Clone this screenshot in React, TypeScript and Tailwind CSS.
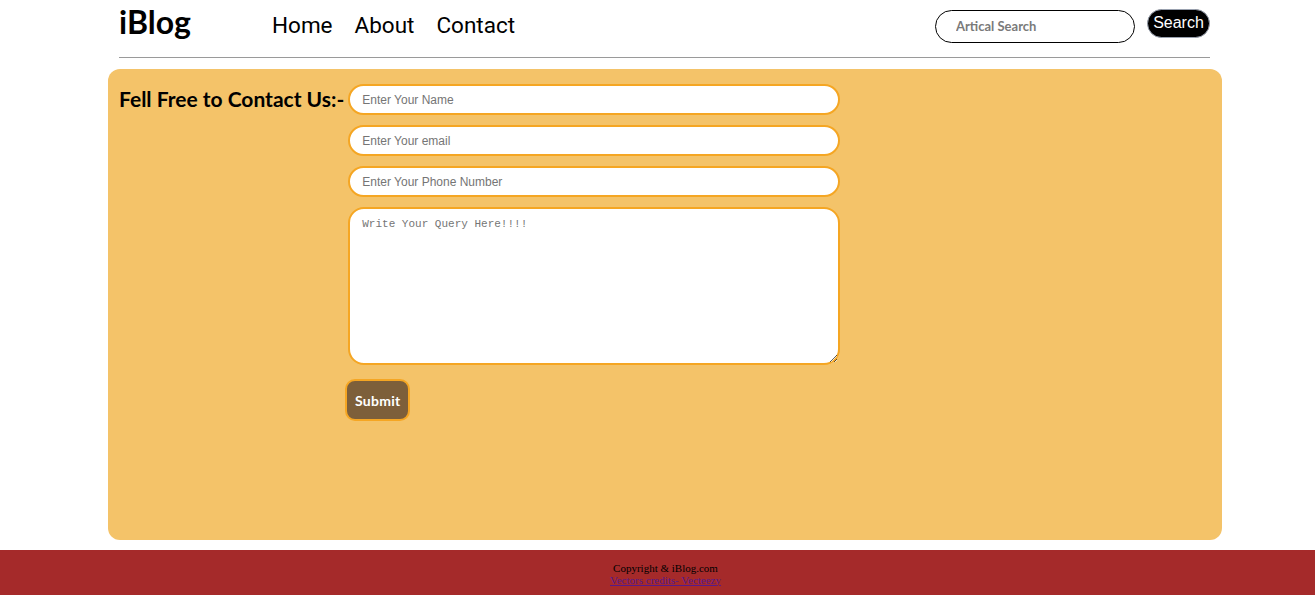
import { useState } from 'react';

export default function App() {
  const [query, setQuery] = useState('');

  return (
    <div className="min-h-[611px] bg-white flex flex-col">
      {/* Navbar */}
      <header className="pl-[119px] pr-[105px]">
        <div className="flex items-center h-[48px] pt-[2px]">
          <div className="w-[153px] text-[32px] font-bold text-black leading-none font-['Lato',sans-serif] -mt-[6px]">iBlog</div>
          <nav className="flex items-center gap-[22px] text-[22.5px] text-black font-['Roboto',sans-serif] leading-none">
            <a href="#">Home</a>
            <a href="#">About</a>
            <a href="#">Contact</a>
          </nav>
          <div className="ml-auto flex items-center gap-[12px] -mt-[4px]">
            <input
              type="text"
              placeholder="Artical Search"
              className="w-[200px] h-[33px] rounded-full border border-black px-[20px] text-[13px] font-bold font-['Lato',sans-serif] placeholder:text-[#7a7a7a] outline-none mt-[6px]"
            />
            <button className="h-[29px] w-[63px] rounded-full bg-black text-white text-[16px] font-['Liberation_Sans',sans-serif] border border-gray-400">
              Search
            </button>
          </div>
        </div>
        <hr className="mt-[9px] border-t border-[#9a9a9a]" />
      </header>

      {/* Contact card */}
      <main className="ml-[108px] mr-[93px] mt-[11px] h-[471px] rounded-[12px] bg-[#f4c369] pl-[11px] pt-[14px]">
        <div className="flex items-start gap-[4px]">
          <h2 className="mt-[2px] text-[21px] font-bold text-black font-['Lato',sans-serif] leading-[28px] whitespace-nowrap">
            Fell Free to Contact Us:-
          </h2>
          <form className="flex flex-col gap-[10px] w-[492px] pt-[1px]" onSubmit={e => e.preventDefault()}>
            <input
              type="text"
              placeholder="Enter Your Name"
              className="h-[31px] rounded-[16px] border-2 border-[#f5a623] bg-white px-[12px] text-[12px] font-['Liberation_Sans',sans-serif] placeholder:text-[#757575] outline-none"
            />
            <input
              type="email"
              placeholder="Enter Your email"
              className="h-[31px] rounded-[16px] border-2 border-[#f5a623] bg-white px-[12px] text-[12px] font-['Liberation_Sans',sans-serif] placeholder:text-[#757575] outline-none"
            />
            <input
              type="tel"
              placeholder="Enter Your Phone Number"
              className="h-[31px] rounded-[16px] border-2 border-[#f5a623] bg-white px-[12px] text-[12px] font-['Liberation_Sans',sans-serif] placeholder:text-[#757575] outline-none"
            />
            <textarea
              value={query}
              onChange={e => setQuery(e.target.value)}
              placeholder="Write Your Query Here!!!!"
              className="h-[158px] rounded-[16px] border-2 border-[#f5a623] bg-white px-[12px] py-[7px] text-[11px] font-['Liberation_Mono',monospace] placeholder:text-[#757575] outline-none"
            />
            <div className="-ml-[3px] mt-[4px]">
              <button
                type="submit"
                className="h-[42px] w-[65px] rounded-[10px] border-2 border-[#f5a623] bg-[#7d5f3a] text-white text-[14px] font-bold font-['Lato',sans-serif] tracking-[0.3px]"
              >
                Submit
              </button>
            </div>
          </form>
        </div>
      </main>

      {/* Footer */}
      <footer className="mt-[10px] h-[45px] bg-[#a52a2a] flex flex-col items-center justify-center pl-[16px] font-['Liberation_Serif',serif] text-[11px] leading-[12px] pt-[2px]">
        <p className="text-black">Copyright &amp; iBlog.com</p>
        <a href="#" className="text-[#551a8b] underline">Vectors credits- Vecteezy</a>
      </footer>
    </div>
  );
}
